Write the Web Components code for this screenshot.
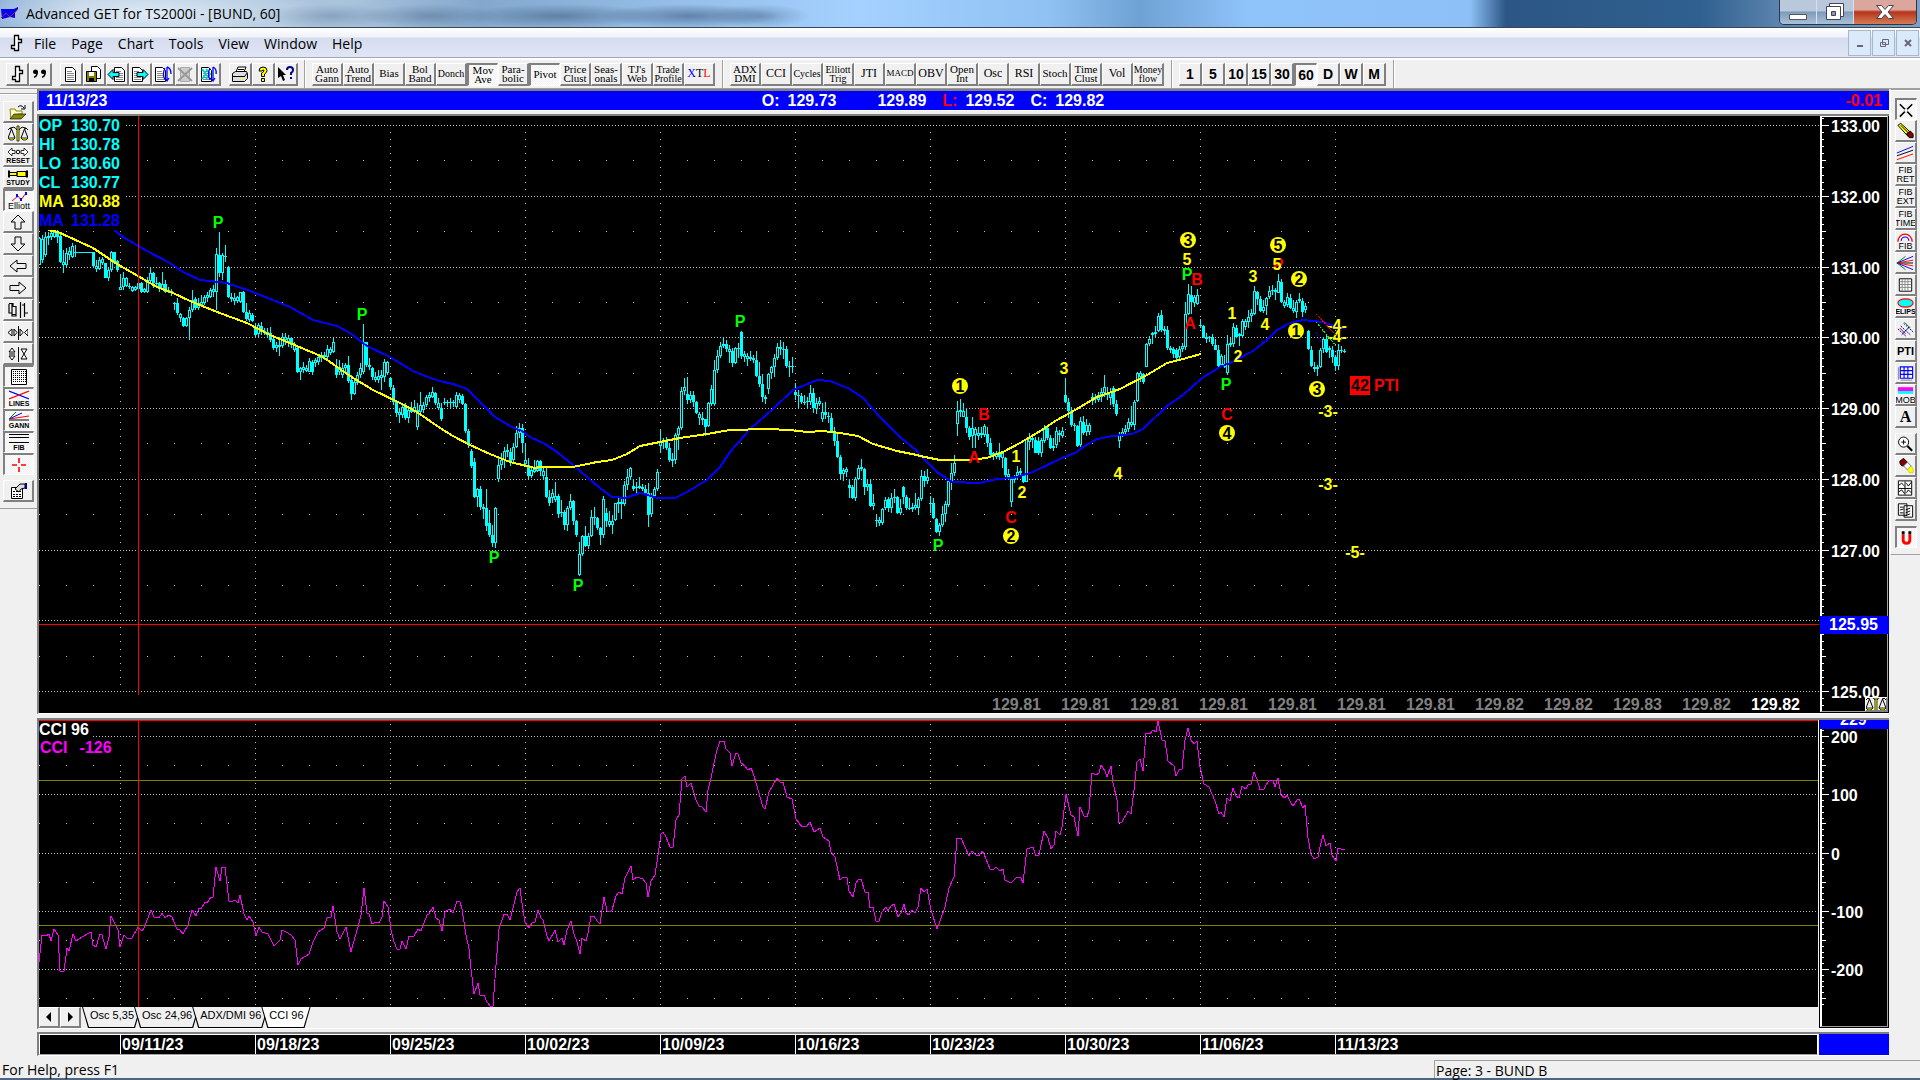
<!DOCTYPE html>
<html lang="en">
<head>
<meta charset="utf-8">
<title>Advanced GET for TS2000i - [BUND, 60]</title>
<style>
    html, body {
        margin: 0;
        background: #f0f0f0;
    }
    body {
        font-family: "Liberation Sans", Arial, sans-serif;
        color: #000;
    }
</style>
</head>
<body>
<get-app></get-app>

<script>
// ---------- icons ----------
const page = '<path d="M4.5 2.5h7l3 3v11h-10z" fill="#fff" stroke="#000"/><path d="M6 6.5h5M6 8.5h7M6 10.5h7M6 12.5h7M6 14.5h7" stroke="#888"/>';
const scales = '<path d="M9 1h2v15h-2z" fill="#ff0" stroke="#000" stroke-width=".8"/><path d="M2 4q4-4 7 1M18 4q-4-4-7 1M0 5q2-3 4-2M20 5q-2-3-4-2M3.500 4L0 13M3.500 4L7 13M16.500 4L13 13M16.500 4L20 13" fill="none" stroke="#000"/><path d="M0 13h7l-2 2H2zM13 13h7l-2 2h-3z" fill="#ff0" stroke="#000" stroke-width=".8"/>';
const ICONS = {
    bar: '<path d="M8.500 1.500h4v4h3v3h-3v8h-4v-2h-3v-3h3z" fill="#fff" stroke="#000" stroke-width="1.300"/>',
    quote: '<path d="M3 7a2.500 2.500 0 1 1 5 0q0 5-4 6v-1.500q2-.8 2-2.500q-3 0-3-2zM11 7a2.500 2.500 0 1 1 5 0q0 5-4 6v-1.500q2-.8 2-2.500q-3 0-3-2z"/>',
    new: page,
    save: '<path d="M7.500 1.500h6l3 3v9h-9z" fill="#fff" stroke="#000"/><path d="M2.500 6.500h10v10h-10z" fill="#808000" stroke="#000"/><path d="M5 7h5v4H5z" fill="#fff"/><path d="M5 13h5v3H5z"/>',
    prev: '<g transform="translate(3)">' + page + '</g><path d="M1 9.500l5-5v3h6v4H6v3z" fill="#0ff" stroke="#000"/>',
    next: '<g transform="translate(-2)">' + page + '</g><path d="M18 9.500l-5-5v3H7v4h6v3z" fill="#0ff" stroke="#000"/>',
    pages: '<g transform="translate(-2)">' + page + '</g><path d="M14 2v14M14 2q4 1 4 7M12 3q-3 6 0 12M11 13l3 3 2-3" fill="none" stroke="#00f" stroke-width="1.300"/>',
    remove: '<path d="M4.500 2.500h9v14h-9z" fill="#ccc" stroke="#aaa"/><path d="M2 3l14 13M16 3L2 16" stroke="#999" stroke-width="2"/>',
    refresh: '<g transform="translate(-2)">' + page + '</g><path d="M3 4l4 5-4 5M7 4l4 5-4 5" fill="none" stroke="#0cc" stroke-width="2"/><path d="M14 2v14M11 3q-3 6 0 12M14 2q4 2 3 7M11 13l3 3 2-3" fill="none" stroke="#00f" stroke-width="1.300"/>',
    print: '<path d="M6 7l2-5h8l-2 5" fill="#fff" stroke="#000"/><path d="M2.500 8.500l3-2h11l1 2v5l-3 3h-12z" fill="#ddd" stroke="#000"/><path d="M3 11.500h12M15 11l2-3M8 4.500h6" stroke="#000"/><path d="M10 13h3v1h-3z" fill="#ff0"/>',
    help: '<path d="M6 6q0-4 4-4t4 3.500q0 2-2.500 3.500v2.500H8.500V8Q11 7 11 5.500 10 4 9 6zM8.500 13.500h3v3h-3z" fill="#ff0" stroke="#000"/>',
    whats: '<path d="M2 2l8 8H7l2 5-2 1-2-5-3 2z"/><path d="M11 5q0-3 3-3t3 3q0 2-2 3v2M15 12v2" fill="none" stroke="#008" stroke-width="2"/>',
    open: '<path d="M2 6h5l1 2h6v3l-4 0-7 5z" fill="#ffc" stroke="#880"/><path d="M2 16l4-5h12l-5 5z" fill="#880" stroke="#000" stroke-width=".6"/><path d="M10 4q3-3 6 1M17 2v4h-4" fill="none" stroke="#000"/>',
    scales,
    reset: '<path d="M0 5l4-4v2.500h3v3H4V9zM20 5l-4-4v2.500h-3v3h3V9z" fill="#fff" stroke="#000" stroke-width=".8"/><circle cx="10" cy="5" r="1.800" fill="#fff" stroke="#000"/>',
    study: '<path d="M1 3.500h8v3H1zM9 2.500h9v5H9z" fill="#ff0" stroke="#000"/><path d="M1 1.500v7M19 1.500v7" stroke="#000" stroke-width="2"/>',
    elliott: '<path d="M3 9l6-5 3 4 5-7" fill="none" stroke="#f00"/><path d="M7 2h2v3H7zM11 6h2v3h-2zM16 0h2v3h-2z" fill="#00f"/>',
    up: '<path d="M10 2l7 7h-4v7H7V9H3z" fill="#eee" stroke="#000"/>',
    down: '<path d="M10 16l7-7h-4V2H7v7H3z" fill="#eee" stroke="#000"/>',
    left: '<path d="M2 9l7-6v3.500h9v5H9V15z" fill="#eee" stroke="#000"/>',
    right: '<path d="M18 9l-7-6v3.500H2v5h9V15z" fill="#eee" stroke="#000"/>',
    bars: '<path d="M1 2.500h3v11h4v-8H5v-3h-1M1 3v9h3v3h4v-3M12.500 1v16M14 4h3M16.500 2v14M17 12h3" fill="none" stroke="#000" stroke-width="1.200"/>',
    squeeze: '<path d="M4 6v7L0 9.500zM6 6v7l3-3.500zM12 6v7l3-3.500zM20 6v7l-3.500-3.500z" fill="#fff" stroke="#000"/><path d="M10.500 3v14" stroke="#000"/>',
    stretch: '<path d="M1 7h6L4 3zM1 11h6l-3 4zM13 4h6l-6 10h6z" fill="#fff" stroke="#000"/><path d="M1 9h6M10.500 2v15" stroke="#000"/>',
    grid: '<path d="M2.500 1.500h15v15h-15z" fill="#fff" stroke="#000"/><path d="M4 3.500h13M4 5.500h13M4 7.500h13M4 9.500h13M4 11.500h13M4 13.500h13" stroke="#000" stroke-dasharray="1 1"/>',
    lines: '<path d="M0 1l20 8" stroke="#00f" stroke-width="1.200"/><path d="M0 9L20 1" stroke="#f00" stroke-width="1.200"/>',
    gann: '<path d="M0 8h20" stroke="#000"/><path d="M0 7L20 4" stroke="#f00"/><path d="M0 7l13-6" stroke="#00f"/><path d="M0 7l7-7" stroke="#080"/>',
    fib: '<path d="M0 .5h20M0 3.500h20M0 8.500h20" stroke="#000"/>',
    cross: '<path d="M10 2v5M10 11v5M3 9h5M12 9h5" stroke="#f00" stroke-width="1.600"/>',
    props: '<path d="M3.500 5.500h11v11h-11z" fill="#fff" stroke="#000"/><path d="M5 9.500h8M5 12.500h8M5 14.500h8" stroke="#000" stroke-dasharray="2 1"/><path d="M7 7l5-5h5v4l-4 1-2 3z" fill="#ddd" stroke="#000"/><path d="M17 1h2v6h-2z" fill="#008"/>',
    x: '<path d="M3 3l13 13M16 3L3 16" stroke="#000" stroke-width="1.600"/><path d="M8 8h3v3H8z" fill="#fff"/>',
    pencil: '<path d="M2 3l3-2 11 10-3 4z" fill="#ff0" stroke="#000"/><path d="M11 12l4-3 3 3v4h-4z" fill="#800" stroke="#000"/><path d="M5 3l9 9" stroke="#000"/>',
    trend: '<path d="M1 9L18 2" stroke="#00f"/><path d="M1 12L18 6" stroke="#000"/><path d="M1 16L18 10" stroke="#f00"/>',
    arc: '<path d="M2 10a7.500 8 0 1 1 15 0" fill="none" stroke="#f00" stroke-width="1.300"/><path d="M5.500 9a4 4 0 0 1 8 0" fill="none" stroke="#00f" stroke-width="1.300"/>',
    fan: '<path d="M1 9h17" stroke="#000"/><path d="M1 9l17-3M1 9l17 3" stroke="#f00"/><path d="M1 9l17-7M1 9l17 7" stroke="#00f"/><path d="M1 9l9-7M1 9l9 7" stroke="#080"/>',
    cells: '<path d="M3.500 2.500h13v13h-13z" fill="#fff" stroke="#000"/><path d="M4 5.500h12M4 8.500h12M4 11.500h12M6.500 3v12M9.500 3v12M12.500 3v12" stroke="#888"/>',
    ellipse: '<ellipse cx="10" cy="5" rx="8" ry="4.300" fill="#0ff" stroke="#f00" stroke-width="1.200"/>',
    fork: '<path d="M2 9l9 8M5 6l10 9M8 3l10 9" stroke="#00a" stroke-dasharray="2 1"/><path d="M4 8l6 6" stroke="#a00"/><path d="M9 2l6 6" stroke="#080"/><path d="M6 15l8-8" stroke="#00a"/>',
    bluegrid: '<path d="M4.500 2.500h13v12h-13zM4 6.500h13M4 10.500h13M8.500 2v12M12.500 2v12" fill="#fff" fill-opacity=".6" stroke="#00f" stroke-width="1.200"/><path d="M2.500 3v13M5 16.500h12" stroke="#888"/>',
    mob: '<path d="M2 1h16v4H2z" fill="#f0f"/><path d="M2 5h16v3H2z" fill="#0ff"/>',
    zoom: '<circle cx="8" cy="7" r="5.300" fill="#fff" stroke="#000"/><path d="M5.500 7h5M8 4.500v5" stroke="#000"/><path d="M12 11l5 5" stroke="#000" stroke-width="2.200"/>',
    erase: '<path d="M4 4l4-3 4 4-4 4q-4 0-4-5z" fill="#800" stroke="#000"/><path d="M8 9l4-4 4 4-4 4z" fill="#fff" stroke="#777"/><path d="M12 13l4-4 2 3v4h-4z" fill="#ff0" stroke="#aa0" stroke-width=".5"/>',
    tiles: '<path d="M2.500 1.500h14v15h-14zM3 9.500h13M9.500 2v14" fill="#fff" stroke="#000"/><path d="M3 6l3-2 3 3M11 4l2 3 3-4M3 13l3-2 3 4M11 14l2-3 3 3" fill="none" stroke="#000"/>',
    copies: '<path d="M2.500 2.500h9v12h-9zM8.500 4.500h9v12h-9z" fill="#fff" stroke="#000"/><path d="M4 6h4M4 9l4-1M4 12h4M10 9l5-2M10 12l5-2M10 15l5-2" stroke="#000"/>',
    magnet: '<path d="M6.500 5v6q0 3.500 3.500 3.500t3.500-3.500V5" fill="none" stroke="#f00" stroke-width="3"/><path d="M5 2h3v3H5zM12 2h3v3h-3z"/>'
};
const icon = (name, h = 18) => name ? `<svg width="20" height="${h}" viewBox="0 0 20 ${h}" aria-hidden="true">${ICONS[name]}</svg>` : '';

// ---------- one push button of a toolbar ----------
class ToolButton extends HTMLElement {
    connectedCallback() {
        const root = this.attachShadow({ mode: 'open' });
        const name = this.getAttribute('icon');
        const short = this.hasAttribute('caption');
        root.innerHTML = `
      <style>
        :host { display: block; flex: none; width: 23px; height: 23px; }
        button {
          box-sizing: border-box; width: 100%; height: 100%; margin: 0; padding: 0;
          display: flex; flex-direction: column; align-items: center; justify-content: center;
          overflow: hidden; color: #000; background: #f0f0f0; font: inherit; text-align: center;
          border: solid; border-width: 1px 2px 2px 1px; border-color: #fff #808080 #808080 #fff;
          white-space: pre-line;
        }
        :host([pressed]) button {
          border-width: 2px 1px 1px 2px; border-color: #808080 #fff #fff #808080;
          background: repeating-conic-gradient(#fff 0 25%, #f0f0f0 0 50%) 0 0 / 2px 2px;
        }
        svg { flex: none; display: block; max-width: 100%; }
      </style>
      <button type="button" aria-label="${this.getAttribute('label') || name || this.textContent}">${icon(name, short ? 10 : 18)}<slot></slot></button>`;
    }
}
customElements.define('tool-button', ToolButton);

// ---------- window caption ----------
class TitleBar extends HTMLElement {
    connectedCallback() {
        this.attachShadow({ mode: 'open' }).innerHTML = `
      <style>
        :host {
          display: flex; align-items: center; height: 27px; border-bottom: 1px solid #3a4654;
          font: 14px "Open Sans", "Noto Sans", sans-serif;
          background:
            radial-gradient(ellipse 70px 12px at 330px 16px, rgba(60,90,125,.3), transparent),
            radial-gradient(ellipse 70px 12px at 430px 16px, rgba(60,90,125,.4), transparent),
            radial-gradient(ellipse 100px 12px at 560px 16px, rgba(60,90,125,.55), transparent),
            radial-gradient(ellipse 90px 12px at 690px 16px, rgba(60,90,125,.6), transparent),
            radial-gradient(ellipse 50px 12px at 760px 16px, rgba(60,90,125,.4), transparent),
            radial-gradient(ellipse 180px 30px at 150px 14px, rgba(235,243,250,.8), transparent),
            linear-gradient(90deg, #8fb2d8 0, #b4cbe1 80px, #a9c3dc 350px, #84a8cd 480px, #94bce6 660px, #a4d1ff 860px, #8fc1f2 1050px, #6fa2d4 1140px, #8fc4fb 1250px, #8cc0f6 1470px, #2b5685 1506px, #2f608f 1700px, #5c84ae 1780px, #7fa0c2 100%);
        }
        .logo { margin: 0 6px 0 0; }
        h1 { margin: 0; font: inherit; flex: 1; line-height: 27px; }
        .keys { display: flex; align-self: flex-start; margin-right: 3px; border: 1px solid #26384c; border-top: 0; border-radius: 0 0 5px 5px; overflow: hidden; }
        button { width: 37px; height: 24px; padding: 0; border: 0; border-right: 1px solid #dde; background: linear-gradient(#b9c8da 45%, #7d9bbb 50%, #a9c0d8); }
        button svg { display: block; margin: auto; }
        .close { width: 62px; border: 0; background: linear-gradient(#dba79c 40%, #b5341b 50%, #d67c55); }
      </style>
      <svg class="logo" width="20" height="14"><path d="M1 2h13l4-2v2l-3 4v5l-5-1-8 2z" fill="#00f"/><path d="M1 11l5-5 4 4 8-8" fill="none" stroke="#c02020"/></svg>
      <h1>Advanced GET for TS2000i - [BUND, 60]</h1>
      <div class="keys">
        <button aria-label="Minimize"><svg width="20" height="20"><path d="M1.500 12.500h17v5h-17z" fill="#fff" stroke="#556"/></svg></button>
        <button aria-label="Restore"><svg width="20" height="20"><path d="M4.500 1.500h14v13h-14z" fill="#fff" stroke="#445"/><path d="M1.500 4.500h14v13h-14z" fill="#fff" stroke="#445"/><path d="M6.500 9.500h4v4h-4z" fill="#89a" stroke="#445"/></svg></button>
        <button class="close" aria-label="Close"><svg width="20" height="20"><path d="M1.500 3.500h5l3.500 4 3.500-4h5l-5.500 6.500 5.500 6.500h-5l-3.500-4-3.500 4h-5L7 10z" fill="#fff" stroke="#445"/></svg></button>
      </div>`;
    }
}
customElements.define('title-bar', TitleBar);

class MenuBar extends HTMLElement {
    connectedCallback() {
        const items = ['File', 'Page', 'Chart', 'Tools', 'View', 'Window', 'Help'];
        this.attachShadow({ mode: 'open' }).innerHTML = `
      <style>
        :host {
          display: flex; align-items: center; height: 29px; border-bottom: 1px solid #a0a8b8;
          font: 14px "Open Sans", "Noto Sans", sans-serif;
          background: linear-gradient(#fff 0, #f0f2f9 9px, #d5dcee 10px, #e1e6f6 100%);
        }
        nav { display: flex; flex: 1; gap: 15px; }
        .bar { margin: 0 8px 0 6px; }
        nav button { padding: 2px 0 0; border: 0; background: none; font: inherit; line-height: 20px; color: #000; }
        .mdi { display: flex; gap: 1px; margin-right: 1px; }
        .mdi button { width: 23px; height: 26px; padding: 0; border: 1px solid #a9b7ca; background: #dbeafa; }
        svg { display: block; margin: auto; }
      </style>
      <svg class="bar" width="20" height="20" viewBox="0 0 20 18">${ICONS.bar}</svg>
      <nav>${items.map(t => `<button type="button">${t}</button>`).join('')}</nav>
      <div class="mdi">
        <button aria-label="Minimize chart"><svg width="12" height="12"><path d="M3 8h6v2H3z" fill="#667"/></svg></button>
        <button aria-label="Restore chart"><svg width="12" height="12"><path d="M4.500 2.500h6v5h-6zM2.500 5.500h5v4h-5z" fill="#dbeafa" stroke="#667"/></svg></button>
        <button aria-label="Close chart"><svg width="12" height="12"><path d="M3 3l6 6M9 3L3 9" stroke="#667" stroke-width="2"/></svg></button>
      </div>`;
    }
}
customElements.define('menu-bar', MenuBar);

// ---------- top toolbars ----------
class ToolStrip extends HTMLElement {
    connectedCallback() {
        const files = [['bar', 'quote'], ['new', 'save', 'prev', 'next', 'pages', 'remove', 'refresh'], ['print', 'help', 'whats']];
        // name, size class, pressed
        const studies = [['Auto\nGann', 'm'], ['Auto\nTrend', 'm'], ['Bias', 'm'], ['Bol\nBand', 'm'], ['Donch', 's'], ['Mov\nAve', 'm', 1], ['Para-\nbolic', 'm'], ['Pivot', 'm', 1], ['Price\nClust', 'm'], ['Seas-\nonals', 'm'], ['TJ\'s\nWeb', 'm'], ['Trade\nProfile', 's']];
        const osc = [['ADX\nDMI', 'm'], ['CCI', 'l'], ['Cycles', 's'], ['Elliott\nTrig', 's'], ['JTI', 'l'], ['MACD', 'xs'], ['OBV', 'l'], ['Open\nInt', 'm'], ['Osc', 'l'], ['RSI', 'l'], ['Stoch', 'm'], ['Time\nClust', 'm'], ['Vol', 'l'], ['Money\nflow', 's']];
        const word = ([t, c, p]) => `<tool-button class="w ${c}" ${p ? 'pressed' : ''}>${t}</tool-button>`;
        this.attachShadow({ mode: 'open' }).innerHTML = `
      <style>
        :host { display: flex; height: 28px; border-top: 2px solid #fff; border-bottom: 1px solid #a0a0a0; background: #f0f0f0; }
        .group { display: flex; align-items: center; border-right: 1px solid #a0a0a0; box-shadow: 1px 0 #fff; padding: 0 7px; }
        .file { gap: 8px; padding: 0 6px; }
        .file div { display: flex; }
        .w { width: 31px; font-family: "Liberation Serif", serif; line-height: 9px; }
        .xs { font-size: 9px; } .s { font-size: 10px; } .m { font-size: 11px; } .l { font-size: 12px; }
        .n { font-size: 14px; font-weight: bold; line-height: 18px; }
        b { font-weight: normal; }
      </style>
      <div class="group file">${files.map(g => `<div>${g.map(n => `<tool-button icon="${n}"></tool-button>`).join('')}</div>`).join('')}</div>
      <div class="group">${studies.map(word).join('')}<tool-button class="w l"><span><b style="color:#00f">X</b>T<b style="color:#f00">L</b></span></tool-button></div>
      <div class="group">${osc.map(word).join('')}</div>
      <div class="group">${['1', '5', '10', '15', '30', '60', 'D', 'W', 'M'].map(t => `<tool-button class="n" ${t === '60' ? 'pressed' : ''}>${t}</tool-button>`).join('')}</div>`;
    }
}
customElements.define('tool-strip', ToolStrip);

// ---------- side toolbars ----------
class ToolDock extends HTMLElement {
    connectedCallback() {
        const left = [[['open'], ['scales'], ['reset', 'RESET'], ['study', 'STUDY'], ['elliott', 'Elliott', 1], ['up'], ['down'], ['left'], ['right'], ['bars'], ['squeeze'], ['stretch'], ['grid', '', 1], ['lines', 'LINES', 1], ['gann', 'GANN', 1], ['fib', 'FIB', 1], ['cross', '', 1]], [['props']]];
        const right = [[['x', '', 1], ['pencil'], ['trend'], ['', 'FIB\nRET'], ['', 'FIB\nEXT'], ['', 'FIB\nTIME'], ['arc', 'FIB'], ['fan'], ['cells'], ['ellipse', 'ELIPS'], ['fork'], ['', 'PTI'], ['bluegrid'], ['mob', 'MOB'], ['', 'A']], [['zoom'], ['erase'], ['tiles'], ['copies']], [['magnet', '', 1]]];
        const groups = this.getAttribute('side') === 'left' ? left : right;
        const kind = (ic, text) => {
            if (['FIB', 'MOB', 'Elliott'].includes(text) && ic !== 'fib') return 'cap big';
            if (ic) return 'cap';
            return text === 'PTI' ? 'pti' : text === 'A' ? 'a' : 'two';
        };
        const button = ([ic, text, p]) => `<tool-button class="${kind(ic, text)}" ${ic ? `icon="${ic}"` : ''} ${ic && text ? 'caption' : ''} ${p ? 'pressed' : ''}>${text || ''}</tool-button>`;
        this.attachShadow({ mode: 'open' }).innerHTML = `
      <style>
        :host { display: block; width: 37px; }
        .box { display: flex; flex-direction: column; gap: 5px; border: solid #a0a0a0; border-width: 1px 0; box-shadow: inset 0 1px #fff; }
        :host([side=left]) .box { margin-top: 4px; padding: 7px 0 6px 3px; }
        :host([side=right]) { width: 30px; }
        :host([side=right]) .box { padding: 8px 0 6px 4px; border-left: 1px solid #fff; }
        tool-button { width: 31px; height: 22px; }
        :host([side=right]) tool-button { width: 22px; }
        .cap { font-size: 7px; line-height: 7px; font-weight: bold; }
        .big { font-size: 9px; line-height: 8px; font-weight: normal; }
        .two { font-size: 9px; line-height: 9px; }
        .pti { font-size: 11px; line-height: 12px; font-weight: bold; }
        .a { font: bold 16px/18px "Liberation Serif", serif; }
      </style>
      <div class="box">${groups.map(g => `<div>${g.map(button).join('')}</div>`).join('')}</div>`;
    }
}
customElements.define('tool-dock', ToolDock);

// ---------- chart data ----------
// bars: high low bodyTop bodyBottom [1 = filled], in thirds of a pixel under y
const BARS = [
    { x: 39, y: 90, d: `440 525 445 525,435 520 447 510,425 500 440 495,425 465 437 445,420 450 430 442,420 445 425 440,418 460 425 440 1,430 520 438 516 1,480 550 516 524,475 530 490 524,
470 510 482 495,460 505 467 500,465 500 485 490,486 489 486 489,486 489 486 489,486 489 486 489,486 489 486 489,486 489 486 489,485 530 487 527 1,510 545 527 538,
500 540 510 538,500 525 508 518,518 565 520 563 1,535 572 540 563,483 545 487 540,485 520 487 515 1,510 545 513 540 1,552 600 592 600,545 600 565 592,560 592 565 588,
580 598 587 590,587 605 590 603,587 603 590 600,575 610 580 598,575 610 578 605 1,595 610 597 605,560 610 570 607,530 580 548 572,545 595 548 580 1,560 590 578 582,
575 605 580 595 1,545 600 583 600,570 610 583 605 1,590 610 600 605,598 618 603 610,635 660 640 643,625 675 640 670 1,668 695 672 685,680 710 683 708 1,680 712 685 708,
650 750 660 685,600 665 630 660,622 660 628 655 1,625 660 640 655,615 650 635 645,615 645 620 640,605 635 615 625,595 625 600 620,585 620 597 605,475 660 492 605,
425 560 495 550 1,488 570 495 548,465 515 498 502,528 625 530 620 1,610 635 620 628,610 645 625 632,618 640 622 632,605 640 607 635,603 670 607 665 1,640 692 665 688 1,
660 695 670 690,670 695 675 692 1,700 740 712 735 1,700 740 705 733,695 735 708 725 1,715 735 722 730,715 745 725 735,712 755 730 750 1,740 780 748 775 1,755 785 765 775,
750 798 765 770,730 775 740 768,730 765 740 750,735 770 745 758,740 775 745 765 1,755 785 765 780,765 850 775 845 1,830 870 835 845,815 850 832 840,825 845 835 842,
805 845 812 845,810 855 815 845 1,805 830 810 820,795 825 800 815,785 815 795 805,785 810 795 802,765 808 778 800,770 795 778 790,745 790 757 785,808 865 830 855 1,
810 855 830 845,820 865 835 855,820 850 825 835,798 880 825 872 1,855 930 870 912 1,865 915 875 912,845 885 855 880,820 865 835 855,702 850 757 845,755 830 757 825 1,
805 840 825 830,830 870 835 862 1,845 875 860 870,840 880 858 870,840 900 855 865,808 875 815 860,812 855 817 850,860 900 865 890 1,885 945 893 935 1,930 980 935 970 1,
955 998 965 975,945 985 950 975,940 990 950 985 1,950 998 960 985,935 970 960 965,930 970 950 965,940 1020 960 1012,905 975 945 965,935 970 945 960,915 950 920 945,
905 935 915 925,892 925 905 920,905 945 908 940 1,925 960 940 955,940 992 955 988 1,925 945 935 940,930 950 937 940,925 955 935 940,930 950 937 940,905 955 915 950,
910 940 915 930,912 945 918 942 1,940 1028 943 1023 1,1018 1073 1023 1065 1,1078 1135 1083 1127 1,1105 1225 1115 1220 1` },
    { x: 477, y: 280, d: `625 680 627 650,618 690 627 680 1,672 717 680 687,627 752 685 737 1,690 770 730 765 1,735 800 765 788 1,682 803 685 788,532 605 555 598,518 570 540 555,500 563 512 540,
492 530 510 517,505 557 515 542 1,490 545 500 540,438 505 460 500,430 475 443 460,432 518 445 490 1,488 560 540 553,535 598 555 587 1,560 593 570 587,540 578 568 575,
540 575 542 572,540 587 542 572 1,560 600 572 587,562 655 592 650 1,630 678 650 670 1,628 670 640 655,605 665 648 660,643 713 647 703 1,660 710 697 700,690 750 697 735 1,
678 752 683 735,642 690 663 683,660 735 663 722 1,720 770 723 765 1,785 887 823 885,765 827 768 823,738 800 768 797 1,760 808 768 797,690 770 710 768,680 735 712 715,
710 750 715 745 1,740 795 745 765 1,648 775 658 765,683 740 698 722 1,693 740 722 735,705 762 722 735,668 722 670 720,655 700 665 672,655 717 665 673 1,603 677 615 673,
567 630 590 615,560 600 565 592,598 633 618 627 1,605 640 620 625,590 628 618 625,612 632 620 628,615 645 627 640 1,608 740 640 705 1,640 710 650 703,622 655 628 648,
567 632 577 628,450 520 485 497,475 507 482 487,472 510 482 505 1,488 545 503 540 1,520 560 538 543,458 552 465 540,437 510 445 465,320 450 333 445,293 345 322 333,
290 372 342 360 1,332 370 345 360,333 380 345 367 1,363 402 367 400 1,395 435 402 415,397 435 415 420,417 467 418 440 1,367 440 370 438,315 377 328 373,240 378 270 373,
210 280 228 270,185 235 198 228,172 205 192 198,180 215 193 208 1,195 248 208 215,205 260 213 250 1,202 253 205 250,188 235 203 205,153 237 157 227 1,213 245 222 230,
220 258 227 237,213 243 232 238,225 248 233 240,213 290 240 288 1,247 320 288 313 1,282 365 313 352 1,345 372 350 358,278 342 283 328,258 298 262 280,222 290 235 262,
190 240 202 235,180 225 202 208,185 238 207 210,198 263 208 258 1,243 290 258 260,230 278 257 260,310 360 337 345 1,330 385 345 348,340 372 347 367 1,345 375 365 368,
350 385 362 367,315 375 340 367,323 400 340 385 1,355 402 370 388,350 378 362 372,370 427 397 418,365 417 397 405 1,395 430 408 412,400 460 413 457 1,440 497 457 482 1,
462 535 482 532 1,525 598 532 583 1,565 603 570 583,560 590 568 577,597 653 615 625 1,615 657 620 653 1,592 662 597 653,555 600 563 597,537 573 562 568,565 645 568 620 1,
597 633 613 620,598 680 613 677 1,642 690 670 677,705 740 720 723,710 737 720 728,683 735 687 728,652 690 660 685,650 697 657 683 1,640 698 655 683,628 670 650 655,
648 702 652 700 1,657 705 685 700,617 672 622 650 1,645 690 650 685 1,655 690 685 688,670 697 680 688,640 690 675 685,650 705 657 685,570 662 587 657,572 620 587 603 1,567 612 592 603` },
    { x: 930, y: 220, d: `828 880 848 852,835 897 848 895 1,893 940 897 937 1,908 947 915 937,857 920 883 915,843 905 853 883,778 860 782 855,730 810 758 782,705 768 730 758,543 647 573 613,
537 590 570 575,548 590 572 590,563 640 590 625 1,617 660 625 650 1,590 683 625 648,620 685 627 645,620 660 640 648,622 655 640 645,612 650 617 645,620 680 642 670 1,
655 710 670 705 1,695 720 700 705,693 718 700 710,668 720 697 710 1,692 745 700 715,710 770 715 765 1,748 780 762 770,775 862 778 845,765 790 770 780,738 780 757 768,
745 772 752 760,762 790 765 787 1,655 787 658 785,640 690 655 665,650 683 655 660,650 700 660 700 1,650 705 662 700 1,655 710 660 700,615 670 628 662,620 660 625 655 1,
645 688 655 685 1,655 693 678 685,622 685 632 675,630 665 640 645,622 655 632 648,473 548 525 545 1,535 595 545 572 1,562 620 572 615 1,608 632 615 618,615 680 618 677 1,
590 680 603 675,588 645 605 640 1,598 648 615 635,610 645 615 637,520 555 530 542,522 548 532 537,515 545 525 540,503 545 515 530,465 530 500 518,500 540 518 525 1,
505 555 517 535,497 560 503 552 1,540 587 552 582 1,635 685 643 663,625 652 635 645,615 648 627 637,595 635 607 627,557 620 607 615,540 630 545 615,455 545 460 542,
452 485 458 470,458 492 462 485 1,370 442 372 440,348 378 357 372,335 372 340 345,318 352 335 342,280 337 287 332,270 335 285 330 1,318 345 328 332,318 390 330 385 1,
378 400 385 390,380 415 388 403 1,385 420 390 415 1,378 418 387 412,370 395 378 387,245 390 282 380,192 285 222 282,198 283 225 245 1,225 260 232 248,208 255 225 252,
297 325 315 318,315 355 318 355 1,340 370 352 357,348 365 352 355,342 378 352 373 1,358 390 375 390 1,375 440 390 437 1,403 440 408 435,405 445 432 440,345 465 372 458,
355 380 370 375,310 380 322 372,315 355 325 350 1,340 378 343 348,298 355 303 348,298 330 303 322,270 325 290 305,268 305 280 288,198 285 213 282,212 255 215 238 1,
228 275 238 272 1,240 278 260 272,230 285 235 258,197 238 212 232,195 225 210 213,205 240 210 215,162 220 183 218,178 250 185 247 1,240 265 245 258,220 262 232 255,
222 268 235 265 1,240 280 265 272,240 293 245 275,218 248 238 243,235 290 243 275 1,250 278 257 270,330 390 332 388 1,378 440 390 437 1,425 455 440 448,435 467 440 447,
385 445 390 440,350 400 358 388,345 398 358 395 1,378 415 383 390,378 430 390 410 1,405 452 410 437 1,372 450 390 437,378 400 390 393,388 398 392 395` }
];

// curves: pieces of "x y" pairs, each with its own origin and scale
const MA_FAST = [
    [0, 90, 3, '145 420 175 427 240 455 280 475 350 522 415 557 470 590 520 610 570 632 650 667 740 700 810 735 890 768 970 800 1050 857 1120 900 1200 940 1250 965'],
    [440, 280, 3, '0 443 40 468 90 495 150 521 210 547 285 563 300 560 400 560 470 547 515 540 560 523 600 498 660 485 720 473 800 462 870 450 980 447 1050 450 1100 456 1150 453 1200 460 1255 468 1300 492 1370 512 1430 525'],
    [920, 220, 3, '0 708 60 719 140 719 200 714 250 697 300 670 350 638 410 600 450 578 530 530 600 508 680 465 740 430 790 418 843 401']
];
const MA_SLOW = [
    [0, 90, 3, '343 420 370 440 440 483 510 518 550 545 600 570 680 578 760 605 870 652 940 690 1010 708 1050 730 1100 768 1170 800 1240 842 1300 868'],
    [440, 280, 3, '0 302 40 313 80 328 110 358 165 410 215 442 245 452 270 472 315 492 350 515 400 555 440 590 480 625 515 650 555 654 600 638 655 653 705 653 740 635 800 600 840 560 870 515 930 447 1000 388 1060 330 1130 300 1170 303 1230 327 1270 355 1320 412 1380 472 1430 512'],
    [920, 220, 3, '0 705 50 755 95 785 180 788 230 777 280 773 340 755 420 717 470 695 490 680 530 656 580 649 635 643 670 628 740 558 790 525 845 475 900 442 930 430 1000 392 1040 360 1070 330 1110 310 1150 301 1210 305 1250 320 1275 325']
];
const CCI = [
    [0, 700, 2.45, `96 785 104 705 112 708 119 702 126 722 133 687 141 705 148 812 156 812 163 745 170 752 178 702 185 723 200 710 222 695 229 735 236 740 244 702 251 705 259 748 266 710 273 647 288 690 295 740 303 705 310 715 324 715 339 680 347 693 354 685 369 630 378 652 390 655 398 638 405 655 414 645 421 652 434 687 442 690 449 703 460 675 471 630 479 648 487 625 493 628 502 605 508 608 516 590 523 592 530 500 538 542 545 500 552 500 560 602 567 607 575 600 582 608 589 585 597 642 605 660 611 648 619 665 627 708 634 680 641 697 656 702 671 738 685 720 692 690 700 697 714 705 722 720 729 795 737 777 758 763 766 727 780 695 795 685 802 653 810 652 817 618 825 697 832 717 847 680 861 757 869 710 876 680 884 645 891 563 898 638 905 643 912 672 920 665 928 668 935 650 942 603 950 620 958 690 965 727 972 748 979 748 986 722 994 748 1002 708 1015 708 1023 687 1031 693 1045 645 1052 642 1060 622 1068 655 1075 660 1082 693 1090 635 1103 628 1111 638 1119 603 1126 607 1133 628 1141 705 1148 748 1155 808 1162 883 1170 848 1177 886 1185 884 1192 905 1200 919 1207 919 1214 795 1222 687 1236 643 1243 643 1250 660 1258 625 1266 575 1273 563 1280 608 1287 665 1295 685 1303 668 1310 665 1317 630 1325 655 1331 660 1339 708 1346 723 1360 690 1368 725 1376 715 1383 735 1390 690 1398 662 1406 703 1413 727 1420 763 1427 713 1435 723 1441 700 1449 648 1456 647 1463 662 1471 672 1479 592 1486 632 1494 635 1500 630 1508 587 1516 577 1523 582 1531 535 1545 497 1552 540 1560 532`],
    [640, 680, 2.178, `0 595 7 596 12 608 18 652 25 603 32 585 38 545 45 463 50 457 57 470 65 500 71 500 78 420 84 405 91 297 97 288 103 322 110 310 122 360 128 379 136 381 143 397 149 330 155 295 161 250 168 210 175 184 182 184 188 207 195 220 201 257 208 220 214 223 221 250 228 257 235 270 241 264 247 280 254 318 267 380 273 387 281 335 288 322 299 293 306 305 312 307 320 350 332 358 339 418 352 440 364 438 371 425 378 457 391 443 398 470 411 482 417 515 424 532 436 601 443 590 450 595 456 632 463 652 470 608 476 596 482 598 489 637 496 637 502 685 508 682 515 722 521 724 528 697 535 680 541 692 547 678 553 672 561 712 568 700 574 673 580 700 586 704 593 690 600 698 606 680 613 623 619 635 626 627 633 690 646 747 654 722 665 682 672 625 684 590 691 473 699 473 717 527 724 512 731 525 738 527 744 514 750 522 763 566 770 566 776 560 783 573 790 568 796 601 809 608 822 590 829 595 835 610 842 506 849 505 855 500 862 529 868 526 881 452 888 475 895 506 901 495 907 452 914 465 920 440 927 342 938 405 946 410 953 468 959 380 967 407 973 412 978 390 985 278 993 285 999 278 1005 254 1012 272 1018 290 1025 257 1031 310 1038 360 1044 428 1050 427 1063 392 1070 403 1076 330 1083 245 1090 237 1096 273 1103 160 1110 162 1117 150 1124 155 1129 122 1137 180 1143 183 1150 243 1162 257 1168 288 1174 270 1181 267 1188 180 1194 143 1201 180 1207 193 1214 184 1220 260 1228 312 1240 322 1253 363 1260 403 1266 395 1273 411 1279 355 1286 363 1292 323 1299 347 1305 355 1312 318 1319 327 1325 315 1331 313 1338 275 1344 297 1351 330 1358 327 1371 300 1378 300 1384 320 1390 295 1397 345 1404 355 1410 345 1417 370 1423 378 1430 360 1436 358 1443 383 1449 375 1455 475 1462 523 1469 538 1477 530 1482 500 1488 465 1495 498 1502 490 1508 525 1515 543 1521 503 1527 508 1535 508`]
];

// text, centre x, centre y, kind (g green, r red, y yellow, c circled)
const MARKS = [
    ['P', 218, 222, 'g'], ['P', 362, 314, 'g'], ['P', 494, 557, 'g'], ['P', 578, 585, 'g'], ['P', 740, 321, 'g'], ['P', 938, 545, 'g'], ['P', 1187, 274, 'g'], ['P', 1226, 384, 'g'],
    ['A', 974, 457, 'r'], ['B', 984, 414, 'r'], ['C', 1011, 517, 'r'], ['B', 1197, 279, 'r'], ['A', 1190, 323, 'r'], ['C', 1227, 414, 'r'], ['P', 1278, 264, 'r'],
    ['1', 1016, 456, 'y'], ['2', 1022, 492, 'y'], ['3', 1064, 368, 'y'], ['4', 1118, 473, 'y'], ['5', 1187, 259, 'y'], ['1', 1232, 313, 'y'], ['2', 1238, 356, 'y'], ['3', 1253, 276, 'y'], ['4', 1265, 324, 'y'], ['5', 1277, 264, 'y'],
    ['-4-', 1337, 325, 'y'], ['-4-', 1337, 336, 'y'], ['-3-', 1328, 411, 'y'], ['-3-', 1328, 484, 'y'], ['-5-', 1355, 552, 'y'],
    ['1', 960, 386, 'c'], ['2', 1011, 536, 'c'], ['3', 1188, 240, 'c'], ['4', 1227, 433, 'c'], ['5', 1278, 245, 'c'], ['2', 1299, 279, 'c'], ['1', 1296, 331, 'c'], ['3', 1317, 389, 'c']
];

const DATES = ['09/11/23', '09/18/23', '09/25/23', '10/02/23', '10/09/23', '10/16/23', '10/23/23', '10/30/23', '11/06/23', '11/13/23'];
const WEEK = 135;
const LEFT = 39;

const curve = parts => parts.map(([ox, oy, s, d]) => {
    const n = d.split(/\s+/).map(Number);
    const out = [];
    for (let i = 0; i < n.length; i += 2) out.push(Math.round(ox + n[i] / s) + ',' + Math.round(oy + n[i + 1] / 3));
    return out.join(' ');
}).join(' ');

const dot = (x, y) => `M${x} ${Math.round(y)}h1v1h-1z`;
const box = (x, y, w, h) => `M${x} ${y}h${w}v${h}h${-w}z`;

// dotted week lines and half-step dots; zero is the y of the first full step
function gridDots(zero, step, top, bottom, legendBottom) {
    let d = '';
    for (let k = 0; k < 10; k++) {
        for (let i = -10; i < 100; i++) {
            const y = zero + i * step / 10;
            if (y < (k ? top : legendBottom) || y > bottom) continue;
            d += dot(120 + k * WEEK, y);
        }
    }
    for (let y = zero + step / 2; y < bottom + 8; y += step) {
        for (let x = LEFT; x < 1335; x += 27) d += dot(x, y);
    }
    return `<path d="${d}" fill="#c0c0c0"/>`;
}
const rule = (y, color, dash = '') => `<line x1="0" x2="100%" y1="${y}.5" y2="${y}.5" stroke="${color}" stroke-dasharray="${dash}"/>`;

function candles() {
    let cyan = '', hole = '';
    for (const run of BARS) {
        run.d.split(',').forEach((bar, i) => {
            const [h, l, t, b, full] = bar.trim().split(' ').map(Number);
            const x = run.x + i * 3;
            const y = v => Math.round(run.y + v / 3);
            const bh = Math.max(1, y(b) - y(t));
            cyan += box(x, y(h), 1, y(l) - y(h)) + box(x - 1, y(t), 3, bh);
            if (!full && bh > 2) hole += box(x, y(t) + 1, 1, bh - 2);
        });
    }
    return `<path d="${cyan}" fill="#0ff"/><path d="${hole}" fill="#000"/>`;
}

class PricePlot extends HTMLElement {
    connectedCallback() {
        const levels = [133, 132, 131, 130, 129, 128, 127, 126, 125].map(p => Math.round(125 + (133 - p) * 70.75));
        const quotes = ['81', '81', '81', '81', '81', '81', '81', '82', '82', '83', '82', '82'];
        const legend = [['OP', '130.70', '#0ff'], ['HI', '130.78', '#0ff'], ['LO', '130.60', '#0ff'], ['CL', '130.77', '#0ff'], ['MA', '130.88', '#ff0'], ['MA', '131.28', '#00f']];
        const marks = MARKS.map(([t, x, y, k]) => (k === 'c' ? `<circle cx="${x}" cy="${y}" r="8" fill="#ff0" shape-rendering="auto"/>` : '') +
            `<text class="${k}" x="${x}" y="${y + 6}" text-anchor="middle">${t}</text>`).join('');
        this.attachShadow({ mode: 'open' }).innerHTML = `
      <style>
        :host { display: block; position: relative; flex: 1; min-width: 0; background: #000; overflow: hidden; font: bold 16px "Liberation Sans", Arial, sans-serif; }
        svg { position: absolute; inset: 0; width: 100%; height: 100%; shape-rendering: crispEdges; }
        .g { fill: #0f0; } .r { fill: #f00; } .y { fill: #ff0; } .c { fill: #000; }
        dl { position: absolute; left: 0; top: 0; margin: 0; width: 87px; display: grid; grid-template-columns: 32px 1fr; line-height: 19px; background: #000; box-sizing: border-box; }
        dd { margin: 0; }
      </style>
      <svg>
        <g transform="translate(0 -116)">${levels.map(y => rule(y, '#c0c0c0', '1 2')).join('')}</g>
        <g transform="translate(-39 -116)">
          ${gridDots(125, 70.75, 118, 686, 236)}
          ${candles()}
          <g fill="none" stroke-width="2">
            <polyline points="${curve(MA_SLOW)}" stroke="#00f"/>
            <polyline points="${curve(MA_FAST)}" stroke="#ff0"/>
          </g>
          ${marks}
          <g stroke-dasharray="2 1"><path d="M1316 314l20 21" stroke="#f00"/><path d="M1316 322l20 24" stroke="#0f0"/><path d="M1316 332l5 10" stroke="#00f"/></g>
          <path d="M1350 376h20v19h-20z" fill="#f00"/>
          <text class="c" x="1351" y="391">42</text><text class="r" x="1374" y="391">PTI</text>
          ${quotes.map((q, i) => `<text x="${992 + i * 69}" y="710" fill="${i === 11 ? '#fff' : '#808080'}">129.${q}</text>`).join('')}
          <path d="M138.500 116V695" stroke="#f00"/>
        </g>
        <g transform="translate(0 -116)">${rule(624, '#f00')}</g>
      </svg>
      <dl>${legend.map(([k, v, c]) => `<dt style="color:${c}">${k}</dt><dd style="color:${c}">${v}</dd>`).join('')}</dl>`;
    }
}
customElements.define('price-plot', PricePlot);

class CciPlot extends HTMLElement {
    connectedCallback() {
        const levels = [736, 794, 853, 911, 969];
        this.attachShadow({ mode: 'open' }).innerHTML = `
      <style>
        :host { display: block; position: relative; flex: 1; background: #000; overflow: hidden; font: bold 16px "Liberation Sans", Arial, sans-serif; }
        svg { position: absolute; inset: 0; width: 100%; height: 100%; shape-rendering: crispEdges; }
        .legend { position: absolute; left: 0; top: 1px; line-height: 18px; color: #fff; }
        .legend div { background: #000; padding-right: 4px; width: max-content; }
        .legend .v { display: flex; gap: 12px; color: #f0f; padding-left: 1px; }
      </style>
      <svg>
        <g transform="translate(0 -720)">${levels.map(y => rule(y, '#c0c0c0', '1 2')).join('')}</g>
        <g transform="translate(-39 -720)">
          ${gridDots(736, 58.25, 724, 1004, 760)}
        </g>
        <g transform="translate(0 -720)">${rule(780, '#808000')}${rule(925, '#808000')}</g>
        <g transform="translate(-39 -720)">
          <polyline points="${curve(CCI)}" fill="none" stroke="#f0f"/>
          <path d="M138.500 720V1007" stroke="#f00"/>
        </g>
        <g transform="translate(0 -720)">${rule(720, '#f00')}</g>
      </svg>
      <div class="legend"><div>CCI 96</div><div class="v"><span>CCI</span><span>-126</span></div></div>`;
    }
}
customElements.define('cci-plot', CciPlot);

// ---------- value scales ----------
class ValueAxis extends HTMLElement {
    connectedCallback() {
        const price = this.getAttribute('kind') === 'price';
        const zero = price ? 9 : 16;
        const step = price ? 70.75 : 58.25;
        const labels = price ? ['133.00', '132.00', '131.00', '130.00', '129.00', '128.00', '127.00', '126.00', '125.00'] : ['200', '100', '0', '-100', '-200'];
        const end = price ? 590 : 284;
        let d = '';
        for (let i = -2; ; i++) {
            const y = Math.round(zero + i * step / 10);
            if (y > end) break;
            if (y > 1) d += box(3, y, i % 10 === 0 ? 7 : i % 5 === 0 ? 4 : 2, 1);
        }
        const text = labels.map((t, i) => t === '126.00' ? '' : `<text x="12" y="${Math.round(zero + i * step) + 7}">${t}</text>`).join('');
        this.attachShadow({ mode: 'open' }).innerHTML = `
      <style>
        :host { display: block; position: relative; width: 70px; flex: none; background: #000; overflow: hidden; font: bold 16px "Liberation Sans", Arial, sans-serif; }
        svg.scale { position: absolute; inset: 0; width: 100%; height: 100%; shape-rendering: crispEdges; fill: #fff; }
        .edge { position: absolute; inset: 0 1px 1px 1px; border: 1px solid #a0a0a0; border-left: 2px solid #fff; border-top-color: #fff; }
        .now { position: absolute; left: 1px; right: 0; height: 18px; line-height: 18px; background: #00f; color: #fff; padding-left: 9px; box-sizing: border-box; }
        .price { top: 500px; }
        .cci { top: -9px; padding-left: 20px; }
        tool-button { position: absolute; right: 1px; bottom: 1px; width: 23px; height: 15px; }
      </style>
      <div class="edge"></div>
      <svg class="scale"><path d="${d}"/>${text}</svg>
      <div class="now ${price ? 'price' : 'cci'}">${price ? '125.95' : '229'}</div>
      ${price ? '<tool-button icon="scales" label="Scale"></tool-button>' : ''}`;
    }
}
customElements.define('value-axis', ValueAxis);

class StudyTabs extends HTMLElement {
    connectedCallback() {
        const tabs = ['Osc 5,35', 'Osc 24,96', 'ADX/DMI 96', 'CCI 96'];
        this.attachShadow({ mode: 'open' }).innerHTML = `
      <style>
        :host { display: flex; height: 21px; background: #f0f0f0; }
        tool-button { width: 21px; height: 21px; }
        .tabs { display: flex; padding-left: 1px; }
        .tabs button { position: relative; isolation: isolate; margin: 0 -7px 0 0; padding: 0 7px 4px 8px; border: 0; background: none; color: #000; font: 11px/13px "Liberation Sans", Arial, sans-serif; white-space: nowrap; }
        .tabs button::before, .tabs button::after { content: ""; position: absolute; inset: 0; z-index: -1; background: #000; clip-path: polygon(0 0, 6px 100%, calc(100% - 6px) 100%, 100% 0); }
        .tabs button::after { inset: 0 1px 1px; background: #f0f0f0; }
        .tabs [aria-selected=true]::after { background: #fff; }
      </style>
      <tool-button label="Previous study"><svg width="8" height="12"><path d="M6 1v10L1 6z"/></svg></tool-button>
      <tool-button label="Next study"><svg width="8" height="12"><path d="M2 1v10l5-5z"/></svg></tool-button>
      <div class="tabs" role="tablist">${tabs.map(t => `<button type="button" role="tab" aria-selected="${t === 'CCI 96'}">${t}</button>`).join('')}</div>`;
    }
}
customElements.define('study-tabs', StudyTabs);

class QuoteBar extends HTMLElement {
    connectedCallback() {
        this.attachShadow({ mode: 'open' }).innerHTML = `
      <style>
        :host { display: grid; grid-template-columns: 1fr auto 1fr; height: 19px; padding: 0 7px; background: #00f; color: #fff; font: bold 16px/19px "Liberation Sans", Arial, sans-serif; }
        .ohlc { display: flex; gap: 8px; padding-right: 54px; }
        .ohlc span:nth-child(even) { margin-right: 8px; }
        .h { visibility: hidden; }
        .low, .net { color: #f00; }
        .net { text-align: right; }
      </style>
      <span>11/13/23</span>
      <div class="ohlc"><span>O:</span><span>129.73</span><span class="h">H:</span><span>129.89</span><span class="low">L:</span><span>129.52</span><span>C:</span><span>129.82</span></div>
      <span class="net">-0.01</span>`;
    }
}
customElements.define('quote-bar', QuoteBar);

class DateAxis extends HTMLElement {
    connectedCallback() {
        this.attachShadow({ mode: 'open' }).innerHTML = `
      <style>
        :host { display: flex; height: 21px; color: #fff; font: bold 16px/19px "Liberation Sans", Arial, sans-serif; }
        .dates { flex: 1; display: flex; background: #000; border: 1px solid #fff; border-bottom-color: #a0a0a0; box-sizing: border-box; padding-left: 80px; margin-right: 1px; overflow: hidden; }
        span { flex: none; width: 135px; box-sizing: border-box; border-left: 1px solid #fff; padding-left: 1px; }
        .corner { width: 70px; background: #00f; }
      </style>
      <div class="dates">${DATES.map(d => `<span>${d}</span>`).join('')}</div>
      <div class="corner"></div>`;
    }
}
customElements.define('date-axis', DateAxis);

class StatusBar extends HTMLElement {
    connectedCallback() {
        this.attachShadow({ mode: 'open' }).innerHTML = `
      <style>
        :host { display: flex; height: 20px; border-bottom: 2px solid #4d6485; font: 14px/24px "Open Sans", "Noto Sans", sans-serif; background: #f0f0f0; }
        .msg { flex: 1; padding-left: 2px; }
        .page { width: 484px; margin-top: 2px; line-height: 20px; padding-left: 1px; border: solid #a0a0a0; border-width: 1px 0 0 1px; }
      </style>
      <div class="msg">For Help, press F1</div><div class="page">Page: 3 - BUND B</div>`;
    }
}
customElements.define('status-bar', StatusBar);

// ---------- sunken frame round a pane ----------
class PaneFrame extends HTMLElement {
    connectedCallback() {
        this.attachShadow({ mode: 'open' }).innerHTML = `
      <style>
        :host { display: flex; border: solid; border-width: 2px 0 1px 2px; border-color: #808080 #fff #fff #808080; }
        ::slotted(.grow) { flex: 1; min-width: 0; }
      </style><slot></slot>`;
    }
}
customElements.define('pane-frame', PaneFrame);

class GetApp extends HTMLElement {
    connectedCallback() {
        this.attachShadow({ mode: 'open' }).innerHTML = `
      <style>
        :host { display: flex; flex-direction: column; min-height: 100vh; overflow: hidden; }
        main { flex: 1; display: flex; }
        .charts { flex: 1; min-width: 0; display: flex; flex-direction: column; padding-bottom: 2px; margin-right: 1px; }
        .price { flex: 1; min-height: 590px; margin: 3px 0 4px; }
        .cci { height: 308px; margin-bottom: 3px; }
        .study { display: flex; flex-direction: column; margin-right: 1px; }
      </style>
      <title-bar></title-bar>
      <menu-bar></menu-bar>
      <tool-strip></tool-strip>
      <main>
        <tool-dock side="left"></tool-dock>
        <div class="charts">
          <pane-frame><quote-bar class="grow"></quote-bar></pane-frame>
          <pane-frame class="price"><price-plot></price-plot><value-axis kind="price"></value-axis></pane-frame>
          <pane-frame class="cci">
            <div class="grow study"><cci-plot></cci-plot><study-tabs></study-tabs></div>
            <value-axis kind="cci"></value-axis>
          </pane-frame>
          <pane-frame><date-axis class="grow"></date-axis></pane-frame>
        </div>
        <tool-dock side="right"></tool-dock>
      </main>
      <status-bar></status-bar>`;
    }
}
customElements.define('get-app', GetApp);
</script>
</body>
</html>
